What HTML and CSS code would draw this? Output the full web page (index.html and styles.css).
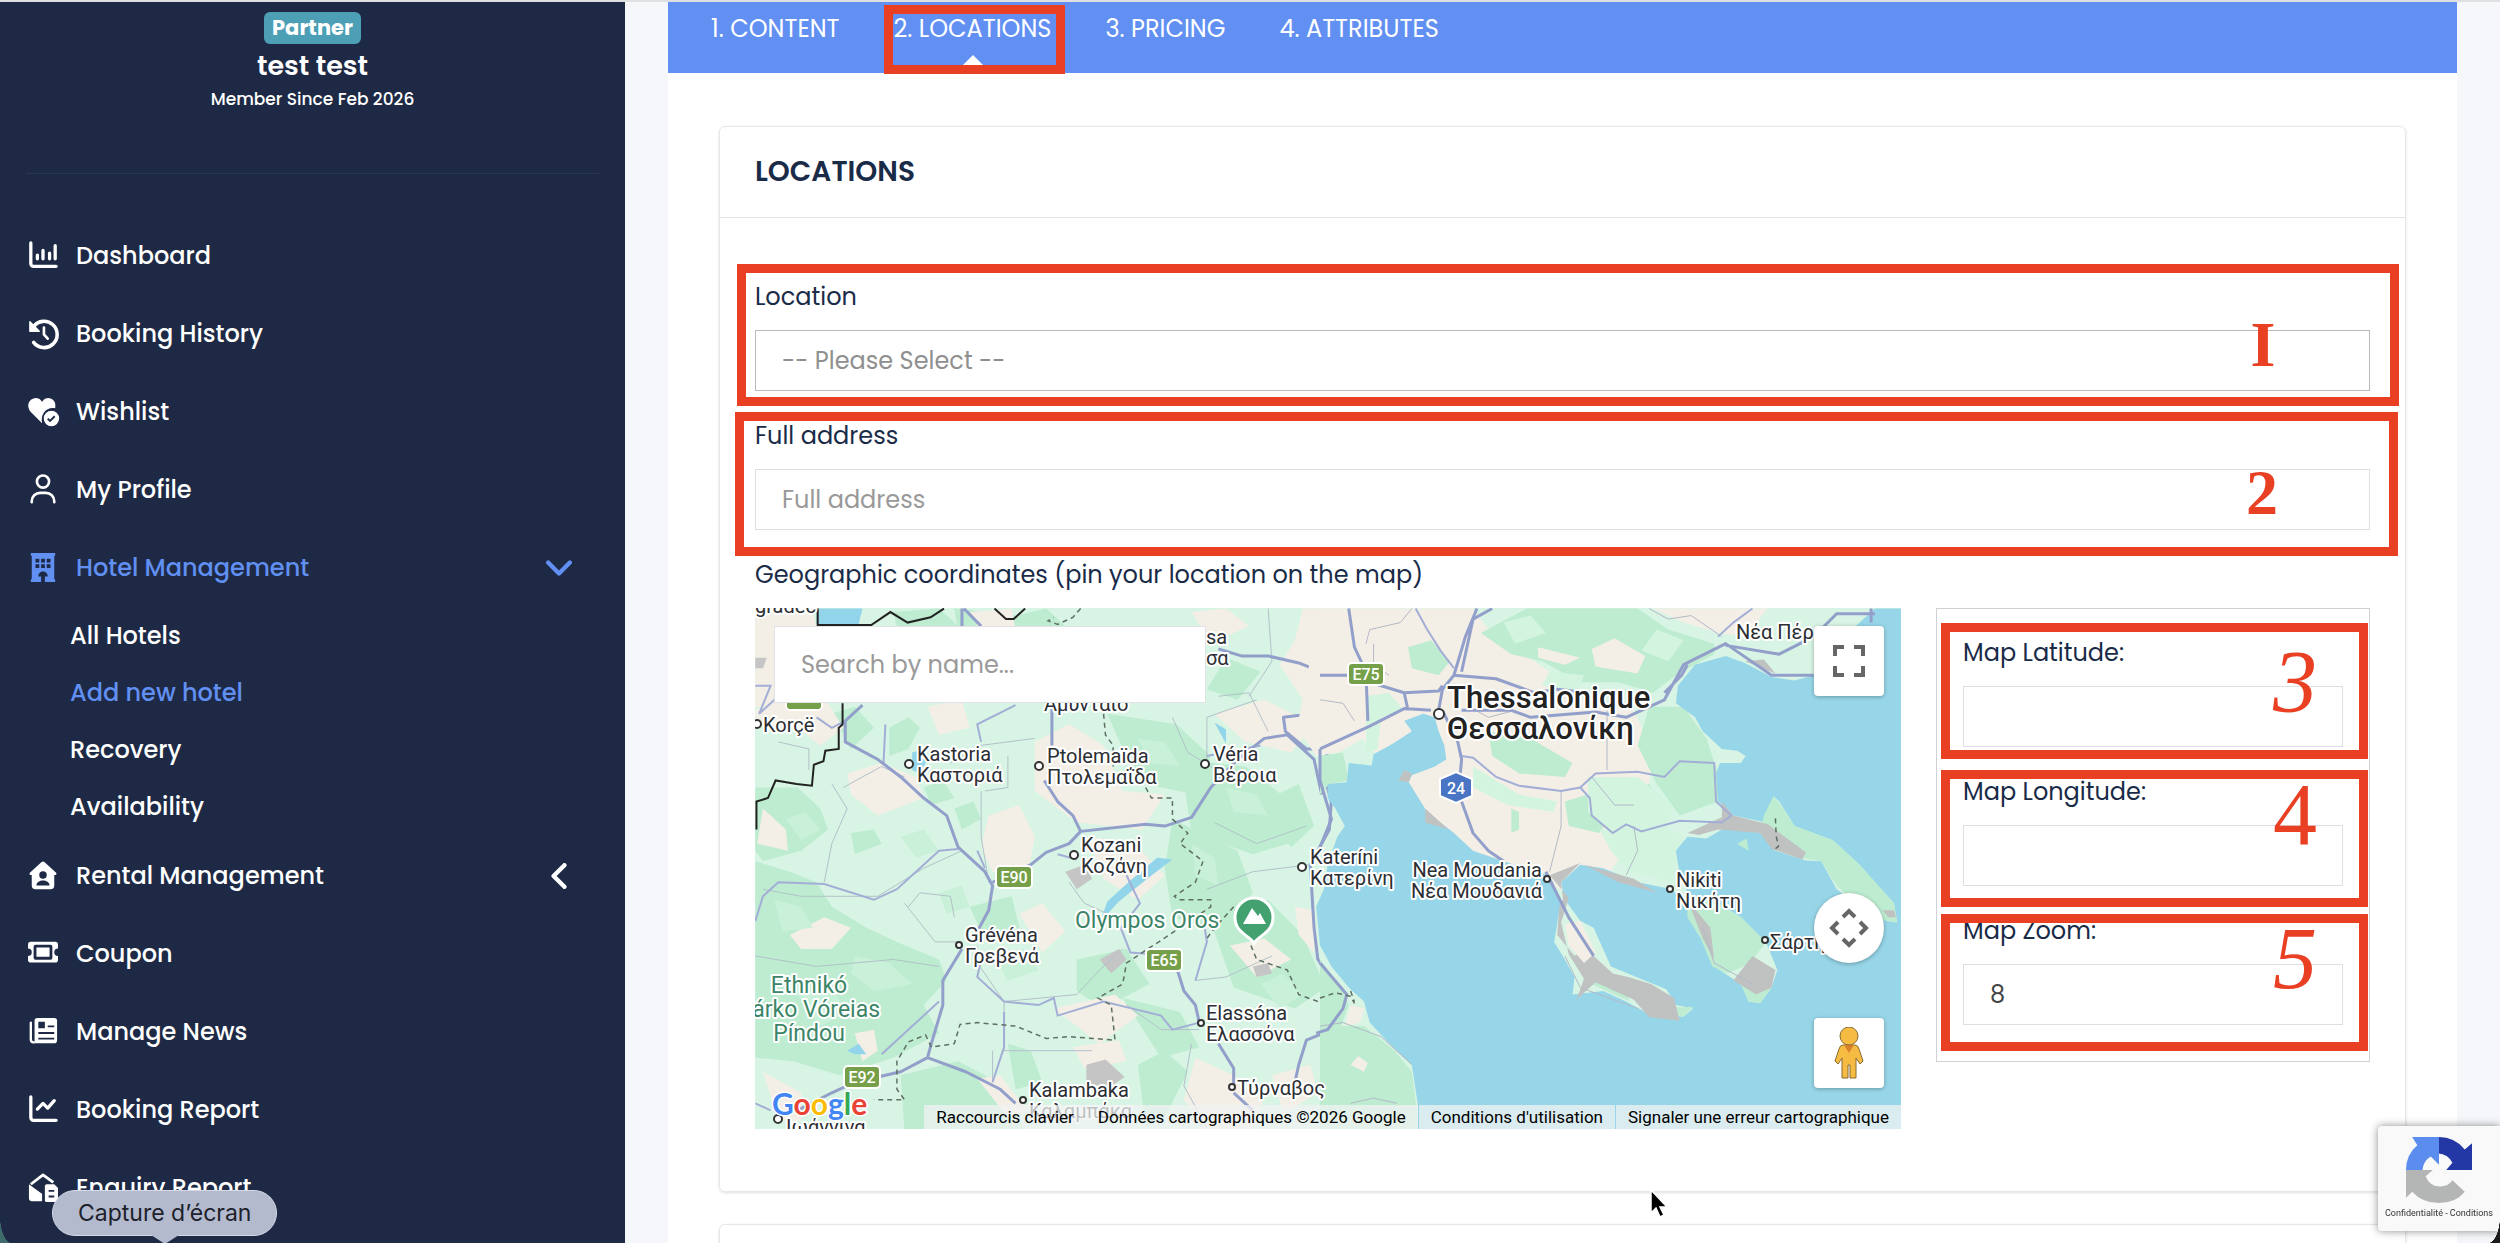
FILE: index.html
```html
<!DOCTYPE html>
<html lang="en">
<head>
<meta charset="utf-8">
<title>Add new hotel - Locations</title>
<meta name="viewport" content="width=device-width, initial-scale=1">
<link rel="stylesheet" href="styles.css">
</head>
<body>
<div class="app">
  <aside class="sidebar">
    <header class="profile">
      <span class="badge">Partner</span>
      <strong class="profile-name">test test</strong>
      <span class="profile-since">Member Since Feb 2026</span>
    </header>
    <nav aria-label="Account">
      <ul class="menu">
        <li><a class="menu-link" href="#">
          <svg class="icon" viewBox="0 0 32 32"><path d="M3 2v22a3 3 0 0 0 3 3h24" fill="none" stroke="currentColor" stroke-width="3.5" stroke-linecap="round"/><path d="M10 15v4M16 10v9M23 13v6M29 5v14" stroke="currentColor" stroke-width="3.5" stroke-linecap="round"/></svg>
          <span>Dashboard</span></a></li>
        <li><a class="menu-link" href="#">
          <svg class="icon" viewBox="0 0 32 32"><path d="M6 8a14 14 0 1 1 0 17" fill="none" stroke="currentColor" stroke-width="3.8" stroke-linecap="round"/><path d="M2 3v10h10z" fill="currentColor" stroke="currentColor" stroke-width="1.5" stroke-linejoin="round"/><path d="M17 9v7.500l4 4.500" fill="none" stroke="currentColor" stroke-width="2.800" stroke-linecap="round"/></svg>
          <span>Booking History</span></a></li>
        <li><a class="menu-link" href="#">
          <svg class="icon" viewBox="0 0 32 32"><path d="M15 28 3 16C-2 10 0 2 8 1c3 0 5 1 7 4C17 2 19 1 22 1c6 1 8 5 7 11-9-2-16 6-14 16z" fill="currentColor"/><circle cx="25" cy="23" r="9" fill="currentColor" stroke="#1e2a45" stroke-width="1.500"/><path d="m21 23 2.500 2.500 5-5" fill="none" stroke="#1e2a45" stroke-width="2"/></svg>
          <span>Wishlist</span></a></li>
        <li><a class="menu-link" href="#">
          <svg class="icon" viewBox="0 0 32 32" fill="none" stroke="currentColor" stroke-width="2.800" stroke-linecap="round"><circle cx="16" cy="7" r="6.500"/><path d="M4 29v-1a9 9 0 0 1 9-9h6a9 9 0 0 1 9 9v1"/></svg>
          <span>My Profile</span></a></li>
        <li><a class="menu-link is-active" href="#">
          <svg class="icon" viewBox="0 0 32 32"><path fill="currentColor" fill-rule="evenodd" d="M3 0h26v3h-1v25h1v3H18v-6h3c0-7-10-7-10 0h3v6H3v-3h1V3H3zM8 6v4h4V6zm6 0v4h4V6zm6 0v4h4V6zM8 12v4h4v-4zm6 0v4h4v-4zm6 0v4h4v-4z"/></svg>
          <span>Hotel Management</span>
          <svg class="chevron" viewBox="0 0 24 24"><path d="m2 7 10 10L22 7"/></svg></a>
          <ul class="submenu">
            <li><a href="#">All Hotels</a></li>
            <li><a class="is-active" href="#">Add new hotel</a></li>
            <li><a href="#">Recovery</a></li>
            <li><a href="#">Availability</a></li>
          </ul></li>
        <li><a class="menu-link" href="#">
          <svg class="icon" viewBox="0 0 32 32"><path fill="currentColor" fill-rule="evenodd" d="M14.500 1q1.500-1.200 3 0L30 12.500c1 1.500 0 2.500-1.500 2.500H28v11a4 4 0 0 1-4 4H8a4 4 0 0 1-4-4V15h-.5C2 15 1 14 2 12.500zM16 11a4 4 0 1 0 0 8 4 4 0 0 0 0-8zM9 26h14c0-7-14-7-14 0z"/></svg>
          <span>Rental Management</span>
          <svg class="chevron" viewBox="0 0 24 24"><path d="M17 2 7 12l10 10"/></svg></a></li>
        <li><a class="menu-link" href="#">
          <svg class="icon" viewBox="0 0 32 32"><path fill="currentColor" fill-rule="evenodd" d="M3 3h26a3 3 0 0 1 3 3v4a4 4 0 0 0 0 8v4a3 3 0 0 1-3 3H3a3 3 0 0 1-3-3v-4a4 4 0 0 0 0-8V6a3 3 0 0 1 3-3zm5 3a2 2 0 0 0-2 2v12a2 2 0 0 0 2 2h16a2 2 0 0 0 2-2V8a2 2 0 0 0-2-2zm1 3h14v10H9z"/></svg>
          <span>Coupon</span></a></li>
        <li><a class="menu-link" href="#">
          <svg class="icon" viewBox="0 0 32 32"><path d="M3 6v18q0 3 3 3" fill="none" stroke="currentColor" stroke-width="2.500" stroke-linecap="round"/><path fill="currentColor" fill-rule="evenodd" d="M10 1h18a3 3 0 0 1 3 3v21a3 3 0 0 1-3 3H6q1-1 1-3V4a3 3 0 0 1 3-3zm1 4v7h7V5zm10 4v2h7V9zM11 16v2h17v-2zm0 6v2h17v-2z"/></svg>
          <span>Manage News</span></a></li>
        <li><a class="menu-link" href="#">
          <svg class="icon" viewBox="0 0 32 32" fill="none" stroke="currentColor" stroke-width="3.500" stroke-linecap="round" stroke-linejoin="round"><path d="M3 2v22a3 3 0 0 0 3 3h24M10 15l6-6 5 5 7-8"/></svg>
          <span>Booking Report</span></a></li>
        <li><a class="menu-link" href="#">
          <svg class="icon" viewBox="0 0 32 32"><path d="M3 12 16 2l11 8" fill="none" stroke="currentColor" stroke-width="3" stroke-linejoin="round"/><path d="M1 12q12 9 14 10v8H4q-3 0-3-3z" fill="currentColor"/><path d="M20 12h8l4 4v13q0 2-2 2H20q-2 0-2-2V14q0-2 2-2z" fill="currentColor"/><path d="M22 19h6M22 25h6" stroke="#1e2a45" stroke-width="2"/></svg>
          <span>Enquiry Report</span></a></li>
      </ul>
    </nav>
  </aside>

  <main class="main">
    <div class="panel">
      <nav class="tabs" aria-label="Steps">
        <a href="#">1. CONTENT</a>
        <a class="is-current" href="#">2. LOCATIONS<span class="mark mark-tab"></span></a>
        <a href="#">3. PRICING</a>
        <a href="#">4. ATTRIBUTES</a>
      </nav>
      <form class="cards">
        <section class="card">
          <h1 class="card-title">LOCATIONS</h1>
          <div class="card-body">
            <div class="field">
              <label for="location">Location</label>
              <select id="location" class="control control-select"><option>-- Please Select --</option></select>
              <span class="mark mark-location"><b class="digit digit-small">I</b></span>
            </div>
            <div class="field">
              <label for="address">Full address</label>
              <input id="address" class="control" type="text" placeholder="Full address">
              <span class="mark mark-address"><b class="digit digit-small">2</b></span>
            </div>
            <div class="field">
              <label for="map-search">Geographic coordinates (pin your location on the map)</label>
              <div class="geo">
                <div class="map">
                  <svg class="map-canvas" viewBox="0 0 1146 521" preserveAspectRatio="xMidYMid slice" role="img" aria-label="Map">
                    <rect width="1146" height="521" fill="#d8f4e4"/>
                    <!-- western half: terrain -->
                    <g transform="translate(-15 -17) scale(.3827 .3509)">
                      <g fill="#bdecd0">
                        <path d="M40 560 150 560 210 620 230 680 160 740 60 770 40 740zM40 770 130 800 200 830 240 900 330 960 410 1000 520 1050 540 1110 480 1180 520 1260 400 1330 260 1380 140 1340 40 1330z"/>
                        <path d="m400 60 120-10 60 60-90 60-70-30zM390 390l50-30 30 30-30 60-50 20zM560 50l160 20 80-20 60 60-120 90-160-20zM960 350l180 30 90 90-40 110-130-30-60-100zM1150 480l170 20 130 110 10 100-120 40-160-60zM1130 650l170 90 40 120-90 110-120-40-20-140zM1350 610l110-60 40 120-60 60zM1230 940l150-60 90 100 60 150-80 60-160-60z"/>
                        <path d="m880 1050 130-30 60 100-120 70-70-50zM420 1380l150-40 140 80 30 120H430zM700 1290l60 20 30 90-70 20zM1000 1160l150 40 50 100-100 30zM1040 1350l70-40 60 60-60 130-50 30zM1270 190l90 40-60 80-80-30zM240 350l60-20 50 60-60 60zM920 100l160 20 40 70-160 20zM560 620l50-20 20 50-50 30zM290 690l60-10 20 40-70 30zM600 900l110-30 20 90-90 30zM480 560l50-20 30 50-60 20z"/>
                      </g>
                      <g fill="#f4efe6">
                        <path d="M40 50h150l10 60-60 90-30 140-70-10zM40 340l100-40 90 20 40 70-60 50-60-50-110-10zM330 130l120-30 150 80-40 90-170 20-90-90zM280 520l90-30 90 40 20 60-120 50-70-60zM650 640l80-30 40 90-20 120-90-20-30-70zM770 430l90-50 90 60 50 130 110 10-60 100-170-20-110-90zM910 700l120 20 80 90-70 70-90-60zM1180 60l90-10 60 50-100 50zM1470 50l110 0v300l-90-10-80-130 40-70z"/>
                        <path d="m1240 350 130-40 130 70-60 80-120-30zM60 620l60 60 5 60-80-20zM130 980l90-50 70 30-50 60-80 0zM730 920l60-30 60 80-60 60zM1280 1010l90-20 70 60-90 50zM1190 1330l100 50 80 60-30 100h-120l-60-90zM60 1370l100 60 0 80-60 0zM820 1190l160-40 60 60-100 80zM300 1260l50-10 10 60-40 30zM870 1300l120-20 20 60-110 20zM620 1390l60-10 70 100-50 20zM1390 1380l100-30 20 80-90 60zM1450 900l50 10 0 120-40-50zM490 330l90-20 20 80-80 20zM600 60l110-10 10 60-90 10z"/>
                      </g>
                      <g fill="#c9f0d9">
                        <path d="m120 650 50-20 40 50-50 30zM90 880l70 20 30 60-80 10zM300 1040l90 20 60 60-100 20-60-50zM150 1150l90-20 40 70-70 40zM640 250l100-30 60 50-90 50zM420 700l60-20 40 60-60 20zM1180 720l60 40 10 80-60-30zM1270 560l80 20 30 60-90-10zM1040 420l70 10 40 70-80-10zM660 1040l80-20 40 60-80 30zM520 860l60-20 20 60-60 20zM1360 1120l60-30 50 60-60 40z"/>
                      </g>
                      <path fill="#c4c5c4" d="m850 800 50-20 20 40-40 30zM940 1050l50-30 20 30-40 40zM905 1350l50-15 50 50-40 30-60-10zM1340 1070l40-10 10 30-40 10zM40 190l30 0-10 30-20 0z"/>
                      <path fill="#92d4ea" d="M200 50h120l-10 45H200zM450 460l30-10 10 30-20 40-20-10zM1090 760l40 5-60 50-80 70-50 60 20-60 60-60zM280 1310l30-20 20 30-30 0zM1240 375l30 60 0-40z"/>
                      <g fill="none" stroke="#b3c1ca" stroke-width="1">
                        <path vector-effect="non-scaling-stroke" d="M240 550 280 620 240 720 220 830M270 560l100-60 60 30M630 570l0 130 20 130M640 570l60-10 0-90M620 1010l0 50 70 110 190-20 60-70 60-60M690 1170l0 140 230 0M660 1400l0-90M60 850l100 20 200 0 120-80 100-50M430 890l80 110 60 0M440 900l30-40 80 10 10 60M1250 300l80-10 50 110M1380 50l10 150-60 100M1220 480l0-120 130-50M1240 660l110 60 130-50M40 1040l160 30 200-20 120 20M1190 1110l80-10 120-60M860 830l40 60 60 30M100 430l80 20 0 60M1010 1180l90 70 100 0M1180 1290l-20 120 60 120M1220 850l120-50 150-20M770 420l-140 20-80 50M1130 360l40 100 90 60"/>
                      </g>
                      <g fill="none" stroke="#a3aed6" stroke-width="2">
                        <path vector-effect="non-scaling-stroke" d="M40 940 60 870 100 830 220 835 350 880 410 850 460 800 520 740 570 735M620 740 640 790M380 380 375 490M630 430 620 380 720 325M1010 810 1045 890 995 960 1020 1030 1080 1035M630 1050 620 1100 690 1170 780 1180 820 1160 830 1210 950 1170 1100 1210 1130 1250 1200 1230M690 1200 690 1300 660 1400M1210 930 1220 1000 1190 1110M370 1320 520 1170M40 270 80 270 50 350 110 290M200 360 240 390 275 370M40 1460 80 1480M830 750 880 765M1360 440 1220 470"/>
                      </g>
                      <g fill="none" stroke="#929fca" stroke-width="3" stroke-linejoin="round">
                        <path vector-effect="non-scaling-stroke" d="M320 325 275 370 275 430 360 480 420 530 480 590 540 640 570 730 640 800 660 840 650 910 620 970M580 1020 530 1110 530 1180 500 1290 490 1330 420 1370 300 1400 240 1430 150 1480M490 1330 590 1370 680 1420 720 1460M660 830 760 780 800 745 860 720 890 685 1060 665 1110 670 1180 645 1230 560 1300 480 1370 420 1430 410M890 685 870 640 830 600 795 540M815 330 815 440M580 50 580 100M585 50 630 100M1250 165 1310 185 1380 185 1460 205 1540 240 1500 310M1570 340 1420 360 1425 400 1480 450 1540 450 1570 440M1540 450 1520 500 1545 600 1540 680 1490 780 1500 960 1510 1050 1570 1140M1430 410 1500 480 1520 580M1140 1070 1160 1140 1190 1180 1200 1230M1250 1290 1290 1360 1290 1420M1570 1240 1480 1280 1460 1350 1450 1400M1290 1430 1340 1480"/>
                      </g>
                      <g fill="none" stroke="#5f6f64" stroke-width="1.500" stroke-dasharray="5 4">
                        <path vector-effect="non-scaling-stroke" d="M890 50 870 75 830 95 805 85 820 75M950 350 955 410 975 440 975 500M1060 560 1075 590 1130 590 1130 650 1170 690 1150 720 1210 770 1190 830 1135 870 1145 880 1230 880 1230 900 1135 970 1080 1010 1010 1060 1000 1120 935 1160 970 1180 980 1280 860 1270 800 1275 720 1240 620 1230 575 1235 560 1290 500 1300 485 1265 440 1285 410 1340 410 1420 430 1450 350 1450M1290 900 1240 960 1220 990M1335 1010 1350 1050 1430 1080 1460 1150 1510 1170 1560 1150"/>
                      </g>
                      <path vector-effect="non-scaling-stroke" fill="none" stroke="#222" stroke-width="2" d="M203 50v47h140l50-37 45 30 60-15 35-25M665 50l30 30 20 0 30-30M268 320v60l-10 10 0 60-35 5-5 30-25 10-5 60-40-5-55-10-20 50-30 10 0 80"/>
                    </g>
                    <!-- eastern half: terrain and sea -->
                    <g transform="translate(565 -17) scale(.3827 .3509)">
                      <path fill="#f4efe6" d="M0 50h400l60 90 100 60 80 60 60 60 120 20 50 120-20 180-90 160-80 60-260-50-200-220-60-110-50-60-60 40-60 10-50-80z"/>
                      <path fill="#f4efe6" d="M870 50h300l-60 80-70-10-90-30z"/>
                      <g fill="#bdecd0">
                        <path d="m420 120 120-70h290l80 60 120 40 0 30-100 60-60 50-90-30-100 0-100-60-80-20zM860 330l90 0 60 90 30 100 0 80-100 40-60-90-50-110zM230 160l60-20 50 60-30 40-70-20zM440 400l110 20 110 70-20 40-120-10-70-50zM640 600l60-20 60 60-30 50-80-20zM770 560l90-10 30 60-60 60-80-40zM500 620l20 10 0 50-20 10zM0 470l60-10 15 80-50 10-25 30z"/>
                      </g>
                      <g fill="#d3f5e0">
                        <path d="M400 500l120 80 100 20-10 30-120-20-90-50zM700 530l130 0 90 80-10 70-150 10-60-60zM730 680l160-10 60 30-30 130-110-30-50-60zM120 300l60-10 40 50-60 20-10 90-30 10zM600 230l90 10-20 50-90-20zM480 90l70-20 40 50-80 30zM880 110l70 30-40 60-70-30z"/>
                      </g>
                      <path fill="#f4efe6" d="m570 160 110 30-40 20-70-20zM710 165l60-30 80 50-20 50-110-20z"/>
                      <path fill="#97d6e8" d="M258 1540 255 1460 240 1350 190 1300 130 1230 115 1170 75 1130 30 1070 0 1010-10 900 10 850 20 780 45 700 65 670 40 620 20 590 20 550 70 545 75 490 135 497 140 465 190 435 240 400 220 370 270 350 300 360 310 400 325 440 330 480 300 500 240 525 232 545 280 630 350 690 400 740 480 770 560 800 600 810 630 880 612 1000 640 1050 665 1100 660 1150 740 1140 800 1170 850 1200 950 1213 975 1190 930 1180 905 1135 860 1115 760 1070 715 960 680 940 640 880 630 830 680 780 740 790 830 830 920 850 960 900 1000 970 1030 1070 1100 1120 1120 1170 1150 1175 1180 1130 1195 1080 1165 1000 1100 930 1040 890 1000 880 960 860 940 810 930 740 960 700 1010 705 1050 680 1100 675 1150 690 1190 740 1270 768 1310 770 1350 850 1400 890 1480 940 1508 945 1500 890 1450 830 1410 780 1340 710 1240 670 1200 600 1185 585 1180 640 1165 660 1080 640 1040 600 1035 520 1045 490 1100 490 1112 470 1090 455 1050 450 1000 400 980 360 930 320 935 270 980 210 1060 185 1110 205 1180 245 1240 255 1290 240 1340 200 1400 100 1450 50 1520 50 1520 1540z"/>
                      <path fill="#bdecd0" d="m1185 585 15 20 40 65 100 40 70 70 90 110 8 55-28-5-80-50-50-50-40-70-80-15-80-65 10-50zM960 870l80 20 60 40 65 70-40 60-60 30-40-20-30-80-35-60zM1100 1120l80 10-30 45-30-5zM850 1190l125-5-25 28zM680 1080l40 20 60 0 30 70-60-30-60-30zM1090 720l25-15 5 35z"/>
                      <path fill="#bdecd0" d="m0 1050 60 90 15 40-20 60 60 0 80 70 45 60 20 170H0z"/>
                      <path fill="#f4efe6" d="m80 1350 20-25 25 20-10 25zM80 1180l35 10-10 40-40 10z"/>
                      <path fill="#c0c2c2" d="m600 810 80-35-50 55 5 50-10 20-5 80 45 60 20-20 30 20 50 50 40 10 60 20 60 40 15 65-80-10-40-50-100-50-50 50 20-60-40-70-20-90 20-70zM1050 600l30 40 90 25 100 80-10 20-80-30-30-45-110-10-50 15-30-5 90-45zM1130 1040l60 40-10 50-40 20-60-40zM960 880l60 80 10 90-30-60zM205 540l15-30 20 10-8 25zM275 620l60 60-60-20zM690 780l130 40 60 40-100-30zM1110 200l50-5 30 40zM1470 910l30 0 5 20-20 0z"/>
                      <path fill="#f4efe6" d="m640 950 40-10 40 90-30 30-40-50z"/>
                      <g fill="none" stroke="#b3b9c6" stroke-width="1"><path vector-effect="non-scaling-stroke" d="M240 50 210 90 130 110 120 150M750 340l0 170M630 570l0 100-30 130M710 530l60 80 50 0M820 670l10 70-30 70M860 50l50 30 60-10 80 60M1000 960l30 100 100 60M640 1040l40 90 150 60M180 240l-40-30 0-60M0 310l60 10 30 50M390 330l50 30 70-20M0 1240l60-10 100 40 80 80M80 1460l60-15 60 15"/></g>
                      <g fill="none" stroke="#a3aed6" stroke-width="2"><path vector-effect="non-scaling-stroke" d="M370 470 400 475 460 530 520 555 630 570 680 560 720 520 830 515 900 530 940 485 1030 490 1035 600 1075 640 1050 660 940 655 840 685 800 665 765 690 710 640 705 590 680 560M250 50 280 110 315 170 350 220M1040 130 1080 90 1130 50"/></g>
                      <g fill="none" stroke="#929fca" stroke-width="3" stroke-linejoin="round"><path vector-effect="non-scaling-stroke" d="M75 50 90 160 120 230 125 370M0 240 70 240 160 270 220 290 310 285 320 270M410 50 380 130 350 240 320 280 310 340M450 50 400 80 370 230M350 240 460 250 560 290 620 280 700 290M320 340 360 430 370 480 365 540M0 450 130 385 220 335 290 340M220 290 230 340M370 600 400 690 440 740 480 770M370 340 500 340 550 360 720 345 800 360 900 310 950 210 1060 150 1180 240 1290 240M900 290 945 240 960 210M1060 155 1200 180 1290 130 1350 65 1450 65M1440 50 1440 90M590 800 650 930 715 1040M0 450 0 540 30 650 0 730M0 1060 70 1150 60 1190 20 1250-10 1260"/></g>
                      <path vector-effect="non-scaling-stroke" fill="none" stroke="#5f6f64" stroke-width="1.500" stroke-dasharray="5 4" d="m1190 648 2 50 6 30-10 8M0 1160l40-15 40 10 10 20M80 1140l10 30"/>
                    </g>
                    <g class="shield">
                      <g fill="#759f48" stroke="#fff" stroke-width="2"><rect x="593" y="55" width="36" height="22" rx="4"/><rect x="241" y="258" width="36" height="22" rx="4"/><rect x="391" y="341" width="36" height="22" rx="4"/><rect x="89" y="458" width="36" height="22" rx="4"/><rect x="31" y="80" width="36" height="22" rx="4"/></g>
                      <path fill="#4a74c4" stroke="#fff" stroke-width="2" d="m701 164 16 7v17l-16 7-16-7v-17z"/>
                      <text x="611" y="72">E75</text><text x="259" y="275">E90</text><text x="409" y="358">E65</text><text x="107" y="475">E92</text><text x="701" y="186">24</text>
                    </g>
                    <g fill="#fff" stroke="#333" stroke-width="2"><circle cx="154" cy="156" r="4"/><circle cx="284" cy="158" r="4"/><circle cx="450" cy="156" r="4"/><circle cx="319" cy="247" r="4"/><circle cx="547" cy="259" r="4"/><circle cx="204" cy="337" r="3"/><circle cx="446" cy="415" r="3"/><circle cx="268" cy="492" r="3"/><circle cx="477" cy="479" r="3"/><circle cx="684" cy="106" r="5"/><circle cx="792" cy="271" r="3"/><circle cx="915" cy="281" r="3"/><circle cx="1010" cy="332" r="3"/><circle cx="2" cy="116" r="4"/><circle cx="23" cy="511" r="4"/></g>
                    <g class="place">
                      <text x="0" y="5">gradec</text>
                      <text x="451" y="36">sa</text><text x="451" y="57">σα</text>
                      <text x="8" y="124">Korçë</text>
                      <text x="289" y="103">Αμύνταιο</text>
                      <text x="162" y="153">Kastoria</text><text x="162" y="174">Καστοριά</text>
                      <text x="292" y="155">Ptolemaïda</text><text x="292" y="176">Πτολεμαΐδα</text>
                      <text x="458" y="153">Véria</text><text x="458" y="174">Βέροια</text>
                      <text x="326" y="244">Kozani</text><text x="326" y="265">Κοζάνη</text>
                      <text x="555" y="256">Kateríni</text><text x="555" y="277">Κατερίνη</text>
                      <text x="210" y="334">Grévéna</text><text x="210" y="355">Γρεβενά</text>
                      <text x="451" y="412">Elassóna</text><text x="451" y="433">Ελασσόνα</text>
                      <text x="274" y="489">Kalambaka</text><text x="274" y="510">Καλαμπάκα</text>
                      <text x="482" y="487">Τύρναβος</text>
                      <text x="31" y="526">Ιωάννινα</text>
                      <text x="787" y="269" text-anchor="end">Nea Moudania</text><text x="787" y="290" text-anchor="end">Νέα Μουδανιά</text>
                      <text x="921" y="279">Nikiti</text><text x="921" y="300">Νικήτη</text>
                      <text x="1015" y="341">Σάρτη</text>
                      <text x="981" y="31">Νέα Πέραμος</text>
                    </g>
                    <g class="city"><text x="692" y="100">Thessalonique</text><text x="692" y="131">Θεσσαλονίκη</text></g>
                    <g class="park">
                      <text x="320" y="320">Olympos Oros</text>
                      <text x="54" y="385" text-anchor="middle">Ethnikó</text><text x="54" y="409" text-anchor="middle">Párko Vóreias</text><text x="54" y="433" text-anchor="middle">Píndou</text>
                    </g>
                    <path fill="#43a16f" stroke="#fff" stroke-width="3" d="M499 335c-5-8-19-10-19-26a19 19 0 0 1 38 0c0 16-14 18-19 26z"/>
                    <path fill="#fff" d="m488 316 9-16 6 8 2-3 6 11z"/>
                    <text class="google" x="17" y="507"><tspan fill="#4285f4">G</tspan><tspan fill="#ea4335">o</tspan><tspan fill="#fbbc05">o</tspan><tspan fill="#4285f4">g</tspan><tspan fill="#34a853">l</tspan><tspan fill="#ea4335">e</tspan></text>
                  </svg>
                  <input id="map-search" class="map-search" type="text" placeholder="Search by name...">
                  <div class="map-tools">
                    <button class="tool" type="button" aria-label="Fullscreen"><svg viewBox="0 0 32 32" fill="none" stroke="#666" stroke-width="4"><path d="M2 11V2h9M21 2h9v9M30 21v9h-9M11 30H2v-9"/></svg></button>
                    <button class="tool tool-round" type="button" aria-label="Move map"><svg class="pan" viewBox="0 0 40 40" fill="none" stroke="#666" stroke-width="4"><path d="m14 9 6-6 6 6M14 31l6 6 6-6M9 14l-6 6 6 6M31 14l6 6-6 6"/></svg></button>
                    <button class="tool" type="button" aria-label="Street view"><svg class="pegman" viewBox="0 0 30 52" stroke="#8a6a30" stroke-width="1" fill="#f6bb42"><path d="M9 18h12q3 0 4 4l4 12-3 3-4-6v20h-6V38h-2v13H8V31l-4 6-3-3 4-12q1-4 4-4z"/><path d="M10 18h10l-5 8z" fill="#d9822b" stroke="none"/><circle cx="15" cy="9" r="9"/></svg></button>
                  </div>
                  <div class="map-credits">
                    <button type="button">Raccourcis clavier</button>
                    <span>Données cartographiques ©2026 Google</span>
                    <a href="#">Conditions d'utilisation</a>
                    <a href="#">Signaler une erreur cartographique</a>
                  </div>
                </div>
                <div class="coords">
                  <div class="field">
                    <label for="lat">Map Latitude:</label>
                    <input id="lat" class="control" type="text">
                    <span class="mark mark-lat"><b class="digit digit-slant">3</b></span>
                  </div>
                  <div class="field">
                    <label for="lng">Map Longitude:</label>
                    <input id="lng" class="control" type="text">
                    <span class="mark mark-lng"><b class="digit">4</b></span>
                  </div>
                  <div class="field">
                    <label for="zoom">Map Zoom:</label>
                    <input id="zoom" class="control" type="text" value="8">
                    <span class="mark mark-zoom"><b class="digit digit-slant">5</b></span>
                  </div>
                </div>
              </div>
            </div>
          </div>
        </section>
        <section class="card card-next"></section>
      </form>
    </div>
  </main>
</div>

<div class="dock-tip">Capture d’écran</div>
<div class="recaptcha">
  <svg viewBox="0 0 64 64" aria-hidden="true"><path fill="#5b8def" d="M6 0h26v27l-8-8q-7 4-8 13H0Q0 17 11 8z"/><path fill="#2338a5" d="M32 0q15 0 25 12l7-6v26H39l6-7q-4-8-13-9z"/><path fill="#b4b5b5" d="M0 32h26l-7 6q4 10 14 10 8 0 12-6l12 11Q48 64 32 64 16 64 6 53l-6 6z"/></svg>
  <p><a href="#">Confidentialité</a> - <a href="#">Conditions</a></p>
</div>
<div class="corner corner-left"></div>
<div class="corner corner-right"></div>
<svg class="cursor" viewBox="0 0 18 30" aria-hidden="true"><path d="M1 1v23l5-5 4 9 4-2-4-8h7z" fill="#000" stroke="#fff" stroke-width="1.500"/></svg>
</body>
</html>
```
FILE: styles.css
```css
* { box-sizing: border-box; }

body {
  margin: 0;
  background: #f5f7fa;
  color: #1a2b48;
  font: 24px/38px Poppins, Inter, "Noto Sans", sans-serif;
}

a { color: inherit; text-decoration: none; }
ul { list-style: none; margin: 0; padding: 0; }

.app {
  display: grid;
  grid-template-columns: 25% minmax(0, 1fr);
  height: 100vh;
  overflow: hidden;
  border-top: 2px solid #dfe0e2;
}

/* Sidebar */
.sidebar { background: #1e2a45; color: #fff; padding: 10px 26px; font-weight: 500; }

.profile {
  display: flex;
  flex-direction: column;
  align-items: center;
  height: 162px;
  border-bottom: 1px solid #2a3752;
}
.badge {
  padding: 0 8px;
  border-radius: 6px;
  background: #4c9fb5;
  font-size: 21px;
  font-weight: 700;
  line-height: 32px;
}
.profile-name { font-size: 27px; font-weight: 600; line-height: 43px; }
.profile-since { font-size: 17px; font-weight: 500; line-height: 24px; }

.menu { padding-top: 43px; }
.menu-link { display: flex; align-items: center; gap: 18px; height: 78px; padding: 0 27px 0 2px; }
.icon { width: 30px; height: 30px; flex: none; overflow: visible; }
.chevron {
  width: 26px;
  height: 26px;
  margin-left: auto;
  fill: none;
  stroke: currentColor;
  stroke-width: 4;
  stroke-linecap: round;
  stroke-linejoin: round;
}
.submenu { padding: 0 0 2px 44px; }
.submenu a { display: block; line-height: 57px; }
.is-active { color: #6190f2; }

/* Main column */
.main { padding: 0 43px; }
.panel { background: #fff; min-height: 100%; }

.tabs { display: flex; gap: 54px; height: 71px; padding: 0 43px; background: #6190f2; color: #fff; }
.tabs a { position: relative; padding-top: 8px; }
.tabs .is-current::after {
  content: "";
  position: absolute;
  left: 50%;
  bottom: 0;
  margin-left: -18px;
  border: 18px solid transparent;
  border-top: 0;
  border-bottom-color: #fff;
}

.cards { display: grid; gap: 32px; padding: 53px 51px; }
.card { border: 1px solid #e6e7ea; border-radius: 6px; box-shadow: 0 1px 3px rgba(0, 0, 0, .12); }
.card-next { height: 120px; }
.card-title {
  margin: 0;
  padding: 0 35px;
  border-bottom: 1px solid #e3e5e8;
  font-size: 28px;
  font-weight: 600;
  line-height: 90px;
}
.card-body { display: grid; gap: 26px; padding: 60px 35px 62px; }

.field { position: relative; display: grid; gap: 14px; }

.control {
  width: 100%;
  height: 61px;
  padding: 0 26px;
  border: 1px solid #dcdfe3;
  border-radius: 0;
  background: #fff;
  color: #444;
  font: inherit;
}
.control-select { appearance: none; border-color: #b9bbbe; color: #8f8f8f; }
.control::placeholder, .map-search::placeholder { color: #999; opacity: 1; }

/* Map */
.geo { display: grid; grid-template-columns: minmax(0, 1146fr) minmax(0, 434fr); gap: 35px; align-items: start; }
.map { position: relative; height: 521px; overflow: hidden; }
.map-canvas { display: block; width: 100%; height: 100%; font-family: Roboto, sans-serif; }
.map-canvas text { paint-order: stroke; stroke: #fff; stroke-width: 4px; stroke-linejoin: round; }
.place { font-size: 20px; fill: #2b2e33; }
.city { font-size: 31px; font-weight: 500; fill: #222; }
.park { font-size: 23px; fill: #3c8567; }
.map-canvas .shield text { font-size: 16px; font-weight: 500; fill: #fff; stroke: none; text-anchor: middle; }
.map-canvas .google { font: 700 30px Lato, sans-serif; stroke-width: 3px; }

.map-search {
  position: absolute;
  top: 18px;
  left: 19px;
  width: 432px;
  height: 77px;
  padding: 0 26px;
  border: 1px solid #e0e2e6;
  color: #444;
  font: inherit;
}
.map-tools { position: absolute; top: 18px; right: 17px; }
.tool {
  display: grid;
  place-items: center;
  width: 70px;
  height: 70px;
  padding: 0;
  border: 0;
  border-radius: 4px;
  background: #fff;
  box-shadow: 0 1px 4px rgba(0, 0, 0, .3);
}
.tool svg { width: 32px; height: 32px; }
.tool .pan { width: 40px; height: 40px; }
.tool .pegman { width: 30px; height: 52px; }
.tool-round { margin: 197px 0 55px; border-radius: 50%; }

.map-credits {
  position: absolute;
  right: 0;
  bottom: 0;
  display: flex;
  background: rgba(240, 243, 243, .75);
  color: #000;
  font: 17px/24px Roboto, sans-serif;
}
.map-credits > * { padding: 0 12px; border: 0; background: none; color: inherit; font: inherit; }
.map-credits a { border-left: 1px solid #97d6e8; }

/* Coordinates */
.coords { display: grid; gap: 26px; padding: 25px 26px 36px; border: 1px solid #cfd1d4; }

/* Numbered highlights drawn over the form */
.mark { position: absolute; z-index: 2; border: 9px solid #e93f23; pointer-events: none; }
.mark-tab { inset: 3px -14px -1px -10px; }
.mark-location { inset: -14px -29px -15px -18px; }
.mark-address { inset: -5px -28px -26px -20px; }
.mark-lat { inset: -11px -25px -12px -22px; }
.mark-lng { inset: -3px -25px -21px -22px; }
.mark-zoom { inset: 2px -25px -26px -22px; }

.digit {
  position: absolute;
  top: -8px;
  right: 42px;
  color: #e93f23;
  font: 88px/88px "Liberation Serif", serif;
}
.digit-slant { font-style: italic; }
.mark-lat .digit { top: 6px; }
.digit-small { top: 40px; right: 109px; width: 36px; text-align: center; font-size: 64px; font-weight: 700; line-height: 64px; }

/* Floating items */
.dock-tip {
  position: fixed;
  left: 52px;
  bottom: 7px;
  padding: 0 25px;
  border: 1px solid #d5dae6;
  border-radius: 23px;
  background: #b3bace;
  color: #1d212b;
  font: 23px/44px Inter, sans-serif;
}
.dock-tip::after {
  content: "";
  position: absolute;
  top: 100%;
  left: 50%;
  margin-left: -14px;
  border: 14px solid transparent;
  border-top: 9px solid #b3bace;
  border-bottom: 0;
}

.recaptcha {
  position: fixed;
  right: 0;
  bottom: 12px;
  display: flex;
  flex-direction: column;
  align-items: center;
  width: 122px;
  height: 105px;
  padding-top: 11px;
  border-radius: 4px 0 0 4px;
  background: #f9f9f9;
  box-shadow: 0 0 8px rgba(0, 0, 0, .45);
}
.recaptcha svg { width: 66px; height: 66px; }
.recaptcha p { margin: 0; color: #333; font: 9px/20px Roboto, sans-serif; white-space: nowrap; }

.corner { position: fixed; bottom: 0; width: 12px; height: 28px; }
.corner-left { left: 0; background: radial-gradient(ellipse at 100% 0, transparent 70%, #3f6b6d 72%); }
.corner-right { right: 0; background: radial-gradient(ellipse at 0 0, transparent 70%, #1b1d1c 72%); }

.cursor { position: fixed; left: 1650px; top: 1189px; width: 18px; height: 30px; }
```
